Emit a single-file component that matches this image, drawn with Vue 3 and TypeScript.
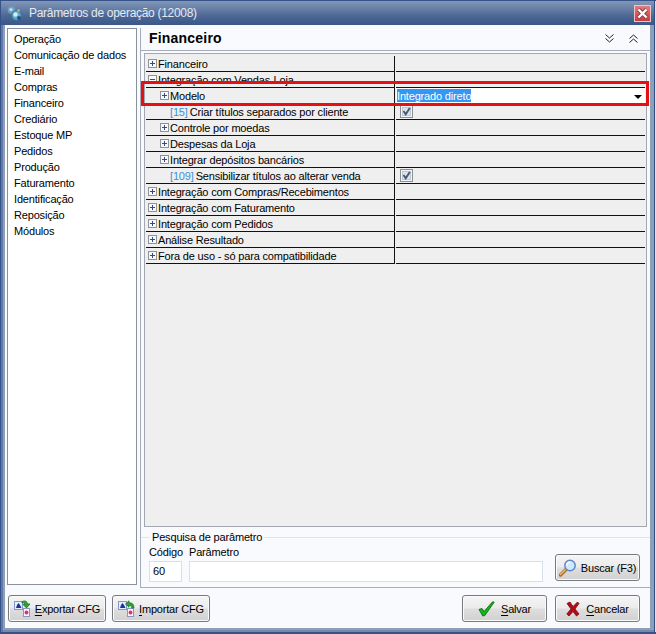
<script setup lang="ts">
interface Row {
  label: string
  code?: string
  level: number
  kind: 'plus' | 'minus' | 'none'
  value?: 'check' | 'combo'
}

const sections: string[] = [
  'Operação', 'Comunicação de dados', 'E-mail', 'Compras', 'Financeiro', 'Crediário',
  'Estoque MP', 'Pedidos', 'Produção', 'Faturamento', 'Identificação', 'Reposição', 'Módulos',
]

const rows: Row[] = [
  { label: 'Financeiro', level: 0, kind: 'plus' },
  { label: 'Integração com Vendas-Loja', level: 0, kind: 'minus' },
  { label: 'Modelo', level: 1, kind: 'plus', value: 'combo' },
  { label: 'Criar títulos separados por cliente', code: '[15]', level: 1, kind: 'none', value: 'check' },
  { label: 'Controle por moedas', level: 1, kind: 'plus' },
  { label: 'Despesas da Loja', level: 1, kind: 'plus' },
  { label: 'Integrar depósitos bancários', level: 1, kind: 'plus' },
  { label: 'Sensibilizar títulos ao alterar venda', code: '[109]', level: 1, kind: 'none', value: 'check' },
  { label: 'Integração com Compras/Recebimentos', level: 0, kind: 'plus' },
  { label: 'Integração com Faturamento', level: 0, kind: 'plus' },
  { label: 'Integração com Pedidos', level: 0, kind: 'plus' },
  { label: 'Análise Resultado', level: 0, kind: 'plus' },
  { label: 'Fora de uso - só para compatibilidade', level: 0, kind: 'plus' },
]
</script>

<template>
  <div class="window">
    <header class="titlebar">
      <svg class="app-icon" width="17" height="17" viewBox="0 0 17 17">
        <circle cx="5.500" cy="5" r="3.800" fill="#6c9fc4" />
        <circle cx="5" cy="4.500" r="1.600" fill="#c5dde8" />
        <circle cx="10.500" cy="10.500" r="4.800" fill="#5fa9cf" stroke="#3a7092" stroke-width="1" />
        <circle cx="9.500" cy="9.500" r="2.200" fill="#d2eef8" />
        <path d="M3 9l3 3-1 1-3-3z" fill="#47688c" />
        <circle cx="12.500" cy="5.500" r="1.300" fill="#c9b45f" />
        <circle cx="13" cy="13" r="2" fill="#1f5683" />
      </svg>
      <span class="caption">Parâmetros de operação (12008)</span>
      <button class="close" aria-label="Fechar">
        <svg width="17" height="17" viewBox="0 0 17 17">
          <path d="M4.500 4.500l8 8M12.500 4.500l-8 8" stroke="#8e3440" stroke-width="4" />
          <path d="M4.500 4.500l8 8M12.500 4.500l-8 8" stroke="#fff" stroke-width="2.400" />
        </svg>
      </button>
    </header>

    <div class="client">
      <div class="main">
        <nav class="sections">
          <div v-for="s in sections" :key="s" class="section">{{ s }}</div>
        </nav>

        <section class="panel">
          <div class="heading">
            <h1>Financeiro</h1>
            <svg width="9" height="9" viewBox="0 0 9 9">
              <path d="M.5.5l4 3.500 4-3.500M.5 4.500l4 3.500 4-3.500" fill="none" stroke="#222" />
            </svg>
            <svg width="9" height="9" viewBox="0 0 9 9">
              <path d="M.5 4.500l4-3.500 4 3.500M.5 8.500l4-3.500 4 3.500" fill="none" stroke="#222" />
            </svg>
          </div>

          <div class="grid">
            <div v-for="r in rows" :key="r.label" class="row">
              <div class="name" :class="'level' + r.level">
                <svg v-if="r.kind !== 'none'" width="9" height="9" viewBox="0 0 9 9" shape-rendering="crispEdges">
                  <rect x=".5" y=".5" width="8" height="8" fill="#f7f8fa" stroke="#8d929c" />
                  <path d="M2 4.500h5" stroke="#344c80" />
                  <path v-if="r.kind === 'plus'" d="M4.500 2v5" stroke="#344c80" />
                </svg>
                <span v-if="r.code" class="code">{{ r.code }}</span>
                <span>{{ r.label }}</span>
              </div>
              <div class="value" :class="r.value">
                <template v-if="r.value === 'combo'">
                  <span class="selected">Integrado direto</span>
                  <svg width="8" height="4" viewBox="0 0 8 4"><path d="M0 0h8L4 4z" /></svg>
                </template>
                <svg v-if="r.value === 'check'" width="13" height="13" viewBox="0 0 13 13">
                  <rect x=".5" y=".5" width="12" height="12" fill="#f3f4f5" stroke="#8b9097" />
                  <rect x="2.500" y="2.500" width="8" height="8" fill="#dfe3e8" stroke="#c0c7cf" />
                  <path d="M3.500 6l2.200 3.200L9.800 3" fill="none" stroke="#42567f" stroke-width="1.900" />
                </svg>
              </div>
            </div>
          </div>

          <fieldset class="search">
            <legend>Pesquisa de parâmetro</legend>
            <label class="field id">Código<span class="input">60</span></label>
            <label class="field text">Parâmetro<span class="input"></span></label>
            <button class="btn find">
              <svg width="18" height="18" viewBox="0 0 18 18">
                <path d="M1.500 16L7 10.500" stroke="#a86b2c" stroke-width="3.400" stroke-linecap="round" />
                <path d="M1.500 15.500L6.500 10.500" stroke="#edb46b" stroke-width="1.600" stroke-linecap="round" />
                <circle cx="11" cy="6.500" r="5.200" fill="#cdeafd" stroke="#6585c3" stroke-width="1.500" />
                <path d="M7.800 6.500a3.200 3.200 0 0 1 3.200-3.200" fill="none" stroke="#fff" stroke-width="1.400" />
              </svg>
              <span>Buscar (F3)</span>
            </button>
          </fieldset>
        </section>
      </div>

      <footer class="actions">
        <button class="btn cfg">
          <svg width="17" height="17" viewBox="0 0 17 17">
            <rect x=".5" y="1.500" width="8" height="8" fill="#e6edfb" stroke="#8098cf" />
            <path d="M2 8l1-3 1.500-2L6 5l1.500 3z" fill="#1d3293" />
            <rect x="9.500" y="8.500" width="6" height="8" fill="#f7f5ff" stroke="#8894ca" />
            <circle cx="12.500" cy="12.500" r="1.900" fill="#d8365b" />
            <path d="M8 1.500q5-2 5.500 2.500H16l-3.500 4L9 4.500h2Q11 2 8 3z" fill="#31a335" stroke="#176b20" stroke-width=".7" />
          </svg>
          <span><u>E</u>xportar CFG</span>
        </button>
        <button class="btn cfg">
          <svg width="17" height="17" viewBox="0 0 17 17">
            <rect x=".5" y="1.500" width="8" height="8" fill="#e6edfb" stroke="#8098cf" />
            <path d="M2 8l1-3 1.500-2L6 5l1.500 3z" fill="#1d3293" />
            <rect x="9.500" y="8.500" width="6" height="8" fill="#f7f5ff" stroke="#8894ca" />
            <circle cx="12.500" cy="12.500" r="1.900" fill="#d8365b" />
            <path d="M7.500 4L11 .8v2q5-.3 5 5.200h-2.200q0-3-2.800-2.800v2z" fill="#31a335" stroke="#176b20" stroke-width=".7" />
          </svg>
          <span><u>I</u>mportar CFG</span>
        </button>
        <span class="spacer"></span>
        <button class="btn save">
          <svg width="17" height="16" viewBox="0 0 17 16">
            <path d="M1 8.500l3-1 2 3L14.500.8l1.700.4L6.800 14.500 4.800 15z" fill="#17b51d" stroke="#08700d" stroke-width=".9" />
          </svg>
          <span><u>S</u>alvar</span>
        </button>
        <button class="btn cancel">
          <svg width="14" height="16" viewBox="0 0 14 16">
            <path d="M1 2.500L4 1l3 4.500L11.500 1 13 2.500 9 8l4 5-2.500 2L7 10.500 3 15 .8 13 5 8z" fill="#b20d16" stroke="#760b10" stroke-width=".8" />
          </svg>
          <span><u>C</u>ancelar</span>
        </button>
      </footer>
    </div>
    <div class="highlight"></div>
  </div>
</template>

<style>
body {
  margin: 0;
  overflow: hidden;
}
</style>

<style scoped>
* {
  box-sizing: border-box;
}
.window {
  position: relative;
  width: 656px;
  height: 634px;
  padding: 0 6px 6px 4px;
  overflow: hidden;
  background: #8e9fb8;
  border: solid #35538a;
  border-width: 1px 0 2px 1px;
  box-shadow: inset -1px 0 #d5e4f0, inset -2px 0 #2d4e83, inset 2px 0 #627ba5, inset 0 -2px #7589a8;
  font: 11px/16px "Liberation Sans", Arial, sans-serif;
  letter-spacing: -.17px;
  color: #000;
}
.titlebar {
  display: flex;
  align-items: center;
  height: 24px;
  margin: 0 -4px 0 -4px;
  padding: 0 3px 0 5px;
  background: linear-gradient(#8297b6 0, #7189ad 20%, #4b6694 65%, #3b5787 100%);
  color: #e4e9f2;
}
.app-icon {
  margin-right: 6px;
}
.caption {
  flex: 1;
  font-size: 12px;
  letter-spacing: -.3px;
}
.close {
  width: 17px;
  height: 17px;
  padding: 0;
  border: 1px solid #efc4c6;
  background: linear-gradient(#df7d80, #ca3b43);
}
.close svg {
  display: block;
  margin: -1px;
}
.client {
  height: 603px;
  padding: 3px 0 0 2px;
  background: #f8fafd;
}
.main {
  display: flex;
  gap: 3px;
  height: 560px;
}
.sections {
  width: 130px;
  height: 557px;
  padding: 2px 0 0 6px;
  border: 1px solid #8a919d;
  background: #fff;
}
.section {
  height: 16px;
  white-space: nowrap;
}
.panel {
  display: flex;
  flex: 1;
  flex-direction: column;
  border-left: 1px solid #a5adba;
  border-bottom: 1px solid #a5adba;
}
.heading {
  display: flex;
  align-items: center;
  gap: 15px;
  height: 23px;
  padding: 0 12px 2px 8px;
  border-bottom: 1px solid #a5adba;
}
h1 {
  flex: 1;
  margin: 0;
  font-size: 14px;
  line-height: 18px;
  letter-spacing: .2px;
}
.grid {
  height: 474px;
  margin: 2px 3px 0 3px;
  padding: 2px 1px;
  border: 1px solid #a2a7b0;
  background: #efefef;
}
.row {
  display: flex;
  height: 16px;
}
.name {
  display: flex;
  align-items: center;
  width: 249px;
  padding-left: 2px;
  border-bottom: 1px solid #111;
  border-right: 1px solid #111;
  white-space: nowrap;
}
.name svg {
  margin-right: 1px;
}
.level1 {
  padding-left: 14px;
}
.code {
  margin: 0 2px 0 10px;
  color: #3e91db;
}
.value {
  display: flex;
  align-items: center;
  flex: 1;
  margin-left: 1px;
  padding-left: 4px;
  border-bottom: 1px solid #111;
}
.combo {
  justify-content: space-between;
  padding: 0 3px 0 1px;
  background: #fff;
}
.combo svg {
  margin-top: 2px;
}
.selected {
  height: 13px;
  line-height: 14px;
  background: #3297f5;
  color: #fff;
}
.search {
  display: flex;
  align-items: flex-start;
  height: 58px;
  margin: 2px 0 0;
  padding: 0 0 0 8px;
  border: solid #dce4ec;
  border-width: 1px 0 0;
}
legend {
  margin-left: 1px;
  padding: 0 2px;
  line-height: 16px;
}
.field {
  line-height: 15px;
}
.id {
  width: 33px;
  margin-right: 7px;
}
.text {
  width: 354px;
  margin-right: 12px;
}
.input {
  display: block;
  height: 21px;
  margin-top: 1px;
  padding-left: 3px;
  border: 1px solid #d7dfea;
  background: #fff;
  line-height: 19px;
}
.btn {
  display: flex;
  align-items: center;
  justify-content: center;
  gap: 4px;
  height: 27px;
  padding: 0;
  border: 1px solid #777a7e;
  border-radius: 3px;
  background: linear-gradient(#f5f5f5, #ebebeb 48%, #dedede 52%, #d1d1d1);
  box-shadow: inset 0 0 0 1px #fafafa;
  font: 11px/16px "Liberation Sans", Arial, sans-serif;
  letter-spacing: -.2px;
  color: #000;
  white-space: nowrap;
}
u {
  text-underline-offset: 2px;
}
.find {
  width: 85px;
  margin-top: 9px;
}
.actions {
  display: flex;
  padding: 7px 10px 0 1px;
}
.cfg {
  width: 98px;
  margin-right: 6px;
}
.spacer {
  flex: 1;
}
.save,
.cancel {
  width: 85px;
  gap: 6px;
}
.cancel {
  margin-left: 8px;
}
.highlight {
  position: absolute;
  top: 80px;
  left: 140px;
  width: 508px;
  height: 25px;
  border: 3px solid #e60f14;
}
</style>
